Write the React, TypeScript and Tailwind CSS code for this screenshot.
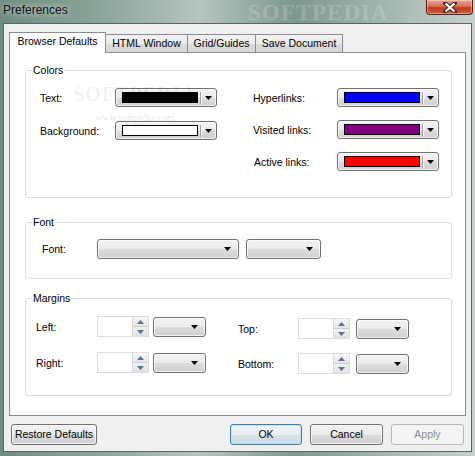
import React from "react";

const Arrow = ({ fill = "#000" }: { fill?: string }) => (
  <svg width="7" height="4" viewBox="0 0 7 4">
    <path d="M0 0H7L3.5 4Z" fill={fill} />
  </svg>
);

const btnBg =
  "bg-[linear-gradient(#f2f2f2_0%,#ebebeb_50%,#dddddd_50%,#cfcfcf_100%)] shadow-[inset_0_0_0_1px_rgba(255,255,255,0.75)]";

function ColorPick({ swatch }: { swatch: string }) {
  return (
    <div className={`w-[102px] h-[19px] rounded-[3px] border border-[#707070] ${btnBg} flex items-center pl-[6px]`}>
      <div className={`w-[76px] h-[11px] border border-black ${swatch}`} />
      <div className="ml-[2px] w-[2px] h-[12px] border-l border-[#a0a0a0] bg-white/80" />
      <div className="flex-1 flex justify-center pr-[1px]">
        <Arrow />
      </div>
    </div>
  );
}

function Combo({ w }: { w: string }) {
  return (
    <div className={`${w} h-[20px] rounded-[3px] border border-[#707070] ${btnBg} flex items-center justify-end pr-[7px]`}>
      <Arrow />
    </div>
  );
}

function Spin() {
  return (
    <div className="w-[52px] h-[21px] flex border border-[#d9dde2] bg-white">
      <div className="flex-1" />
      <div className="w-[16px] flex flex-col border-l border-[#d9dde2]">
        <div className="flex-1 flex items-center justify-center border-b border-[#c9ced6] bg-[linear-gradient(#f7f7f7,#e6e6e6)]">
          <svg width="7" height="4" viewBox="0 0 7 4">
            <path d="M0 4H7L3.5 0Z" fill="#5c6f95" />
          </svg>
        </div>
        <div className="flex-1 flex items-center justify-center bg-[linear-gradient(#f2f2f2,#e1e1e1)]">
          <svg width="7" height="4" viewBox="0 0 7 4">
            <path d="M0 0H7L3.5 4Z" fill="#5c6f95" />
          </svg>
        </div>
      </div>
    </div>
  );
}

function Group({ title, className, children }: { title: string; className: string; children: React.ReactNode }) {
  return (
    <div className={`relative w-[427px] rounded-[3px] border border-[#d5dfe5] flex items-start ${className}`}>
      <span className="absolute left-[6px] -top-[7px] bg-white px-[1px] leading-[12px] text-[#000]">{title}</span>
      {children}
    </div>
  );
}

function Row({ label, lw, children }: { label: string; lw: string; children: React.ReactNode }) {
  return (
    <div className="flex items-center">
      <span className={`${lw} leading-[12px]`}>{label}</span>
      {children}
    </div>
  );
}

function Button({ label, className }: { label: string; className: string }) {
  return (
    <div className={`h-[21px] rounded-[3px] border flex items-center justify-center ${className}`}>{label}</div>
  );
}

const tabBg = "bg-[linear-gradient(#f3f3f3_0%,#ebebeb_50%,#dddddd_50%,#d6d6d6_100%)]";

export default function App() {
  return (
    <div className="relative w-[475px] h-[456px] overflow-hidden flex flex-col font-['Liberation_Sans',Arial,sans-serif] text-[10.5px] text-black bg-[linear-gradient(90deg,#6f8c80_0%,#8ea69b_22%,#b7c4c0_42%,#7e978d_62%,#a2b4ad_80%,#c6d1ce_100%)]">
      {/* title watermark */}
      <div className="absolute left-[248px] top-0 leading-[26px] text-[23px] font-bold tracking-[1px] font-['Liberation_Serif',serif] text-white/20">
        SOFTPEDIA
      </div>
      {/* title bar */}
      <div className="relative h-[23px] flex items-start justify-between">
        <span className="pl-[3px] pt-[3px] text-[12px] leading-[14px] text-[#111] [text-shadow:0_0_6px_rgba(255,255,255,0.9)]">
          Preferences
        </span>
        <div className="mr-[2px] w-[47px] h-[15px] rounded-b-[4px] border border-t-0 border-[#5a1e14] bg-[linear-gradient(#e6a895_0%,#d86f56_45%,#c23a1f_55%,#d45a3c_100%)] flex items-center justify-center shadow-[inset_0_0_0_1px_rgba(255,220,200,0.5)]">
          <svg width="14" height="11" viewBox="0 0 14 11">
            <path d="M2 1L12 10M12 1L2 10" stroke="#3a2a2a" strokeWidth="4" strokeLinecap="square" />
            <path d="M2.5 1.5L11.5 9.5M11.5 1.5L2.5 9.5" stroke="#fff" strokeWidth="2.2" />
          </svg>
        </div>
      </div>

      {/* client */}
      <div className="mx-[3px] h-[429px] bg-[#f0f0f0] border border-[#55666b] pl-[5px] pr-[6px] pt-[8px] flex flex-col">
        {/* tabs */}
        <div className="flex items-end h-[20px]">
          <div className="relative z-10 w-[97px] h-[21px] -mb-px border border-b-0 border-[#898c95] bg-white flex items-center justify-center pb-[2px]">
            Browser Defaults
          </div>
          <div className={`w-[82px] h-[18px] border border-b-0 border-l-0 border-[#898c95] ${tabBg} flex items-center justify-center`}>
            HTML Window
          </div>
          <div className={`w-[68px] h-[18px] border border-b-0 border-l-0 border-[#898c95] ${tabBg} flex items-center justify-center`}>
            Grid/Guides
          </div>
          <div className={`w-[87px] h-[18px] border border-b-0 border-l-0 border-[#898c95] ${tabBg} flex items-center justify-center`}>
            Save Document
          </div>
        </div>

        {/* panel */}
        <div className="relative w-[457px] h-[364px] border border-[#898c95] bg-white px-[15px] pt-[17px] flex flex-col">
          <Group title="Colors" className="h-[128px] pt-[17px] pl-[14px]">
            <div className="w-[213px] flex flex-col gap-[14px]">
              <Row label="Text:" lw="w-[75px]">
                <ColorPick swatch="bg-black" />
              </Row>
              <Row label="Background:" lw="w-[75px]">
                <ColorPick swatch="bg-white" />
              </Row>
            </div>
            <div className="flex flex-col gap-[13px]">
              <Row label="Hyperlinks:" lw="w-[84px]">
                <ColorPick swatch="bg-[#0000ff]" />
              </Row>
              <Row label="Visited links:" lw="w-[84px]">
                <ColorPick swatch="bg-[#800080]" />
              </Row>
              <Row label="Active links:" lw="w-[84px] pl-[1px]">
                <ColorPick swatch="bg-[#ff0000]" />
              </Row>
            </div>
          </Group>

          <Group title="Font" className="mt-[24px] h-[57px] pt-[16px] pl-[16px]">
            <Row label="Font:" lw="w-[55px]">
              <Combo w="w-[142px]" />
              <div className="ml-[7px]">
                <Combo w="w-[75px]" />
              </div>
            </Row>
          </Group>

          <Group title="Margins" className="mt-[19px] h-[98px] pt-[17px] pl-[10px]">
            <div className="w-[202px] flex flex-col gap-[15px]">
              <Row label="Left:" lw="w-[61px]">
                <Spin />
                <div className="ml-[4px]">
                  <Combo w="w-[53px]" />
                </div>
              </Row>
              <Row label="Right:" lw="w-[61px]">
                <Spin />
                <div className="ml-[4px]">
                  <Combo w="w-[53px]" />
                </div>
              </Row>
            </div>
            <div className="flex flex-col gap-[14px] pt-[2px]">
              <Row label="Top:" lw="w-[60px]">
                <Spin />
                <div className="ml-[6px]">
                  <Combo w="w-[53px]" />
                </div>
              </Row>
              <Row label="Bottom:" lw="w-[60px]">
                <Spin />
                <div className="ml-[6px]">
                  <Combo w="w-[53px]" />
                </div>
              </Row>
            </div>
          </Group>

          {/* watermark */}
          <div className="absolute left-[63px] top-[26px] text-[20px] font-bold tracking-[1px] font-['Liberation_Serif',serif] text-black/[0.06]">
            SOFTPEDIA<sup className="text-[7px] font-normal">™</sup>
          </div>
          <div className="absolute left-[85px] top-[57px] text-[10px] text-black/[0.12] font-['Liberation_Serif',serif]">
            www.softpedia.com
          </div>
        </div>

        {/* buttons */}
        <div className="mt-[8px] flex pr-[1px]">
          <Button label="Restore Defaults" className={`ml-[2px] w-[86px] border-[#707070] ${btnBg}`} />
          <div className="ml-auto flex gap-[8px]">
            <Button
              label="OK"
              className="w-[72px] border-[#3c7fb1] bg-[linear-gradient(#f0f4f7_0%,#e8eef3_50%,#dae3ea_50%,#d0dbe4_100%)] shadow-[inset_0_0_0_1px_rgba(190,225,245,0.9)]"
            />
            <Button label="Cancel" className={`w-[73px] border-[#707070] ${btnBg}`} />
            <Button label="Apply" className="w-[73px] border-[#b5b8bb] bg-[#f4f4f4] text-[#8d8d8d]" />
          </div>
        </div>
      </div>
    </div>
  );
}
